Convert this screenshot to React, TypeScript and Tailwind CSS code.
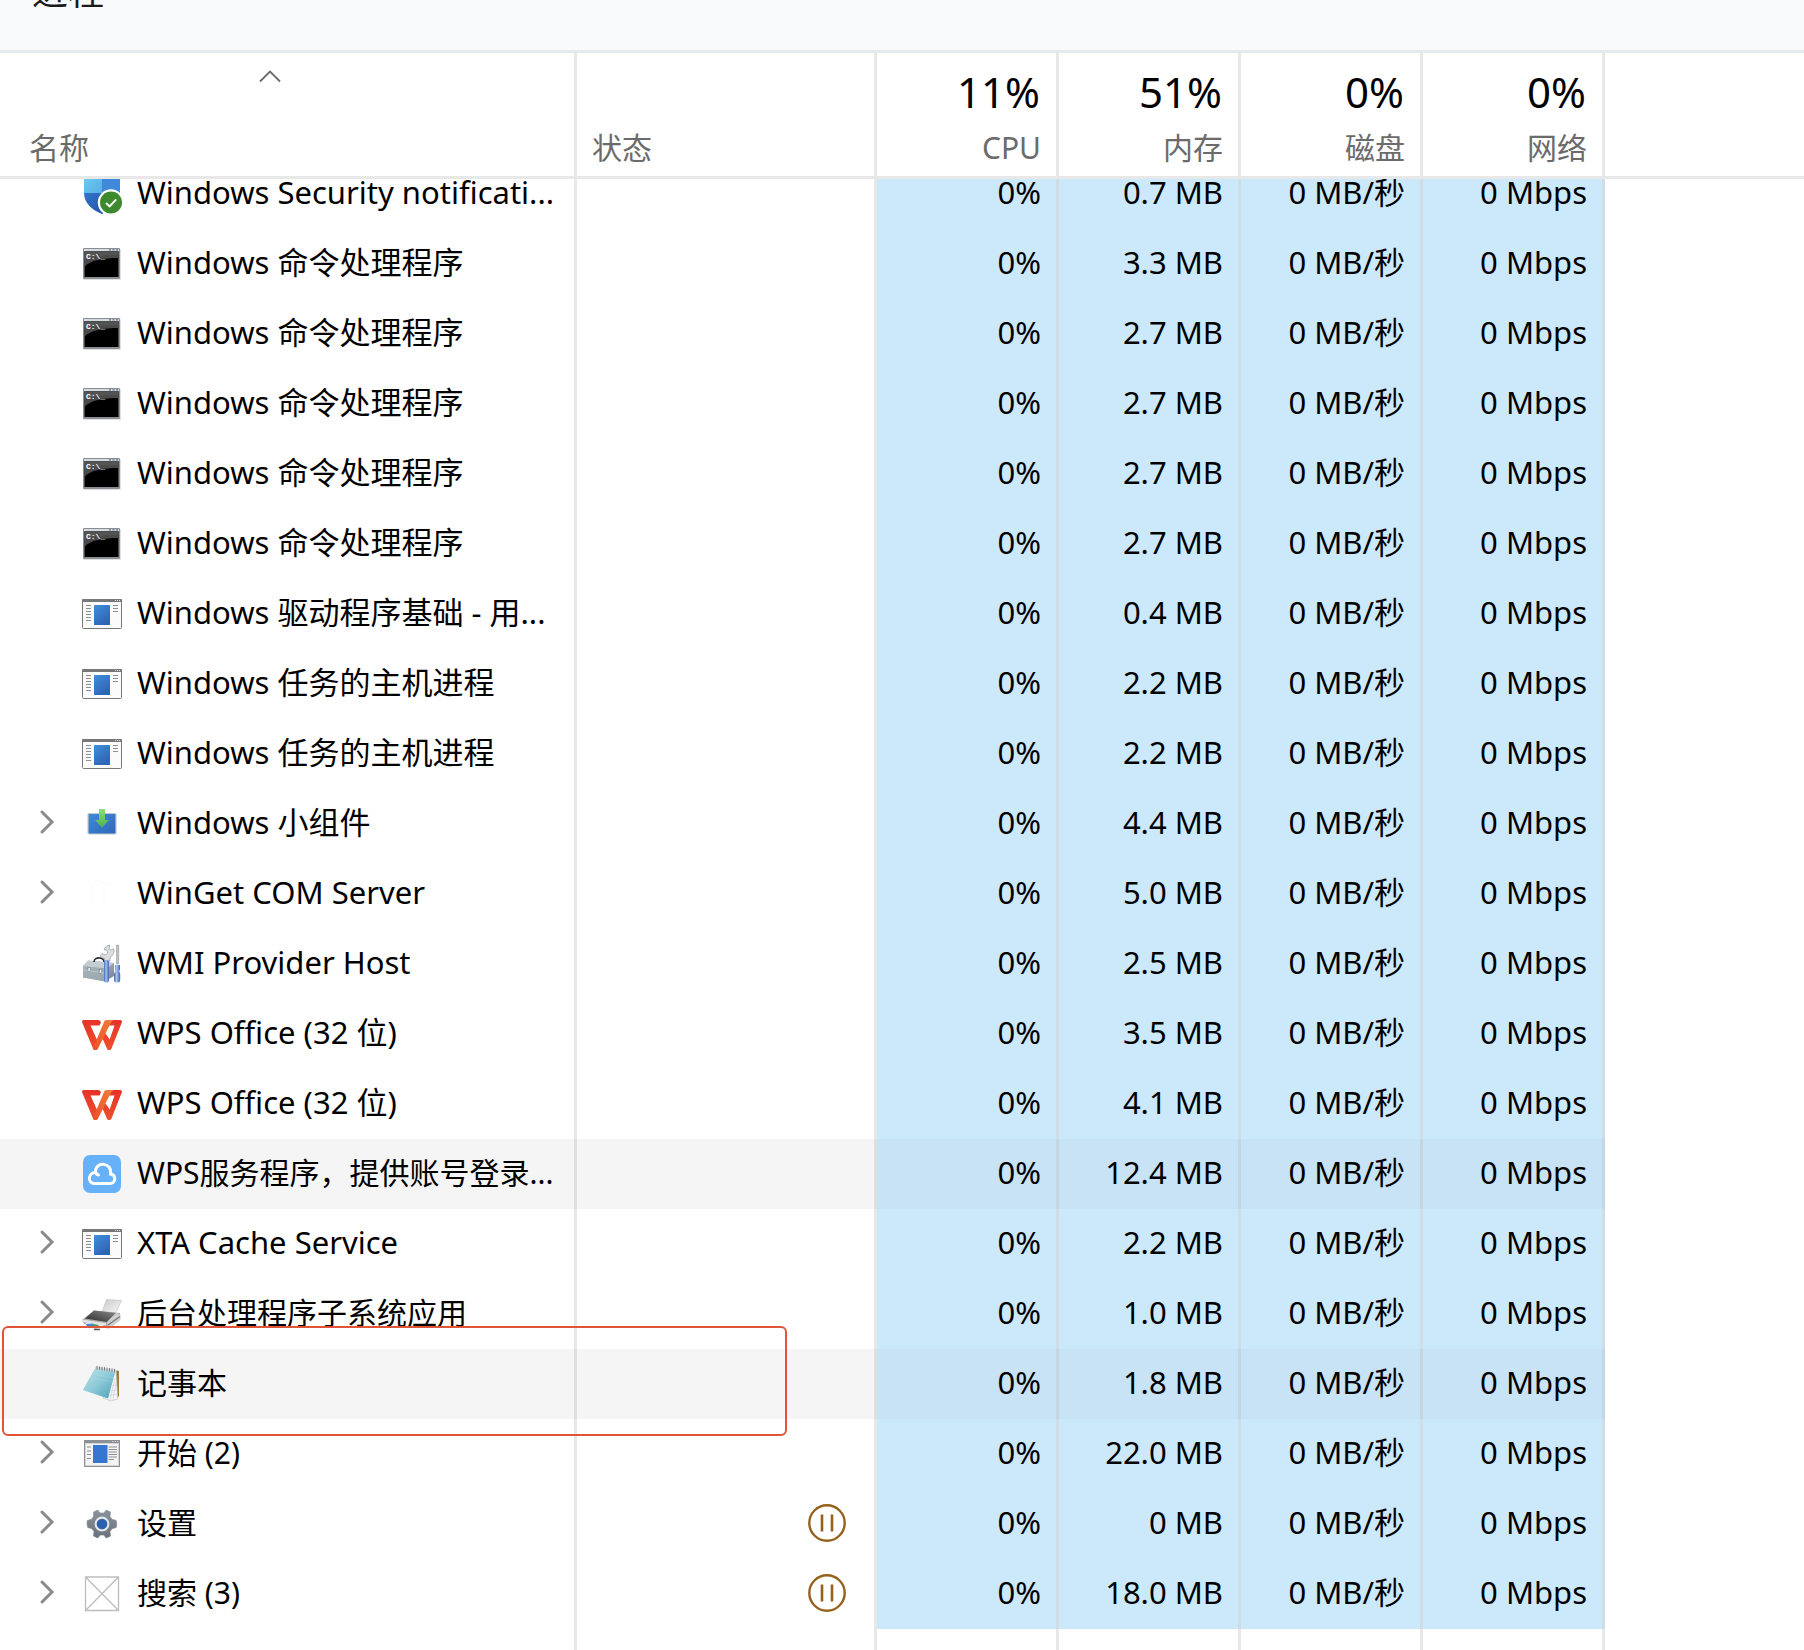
import type { ReactNode } from "react";

const COLS = "grid grid-cols-[577px_300px_repeat(4,182px)_minmax(0,1fr)]";
const LINE = "border-r-[3px] border-[#e8e8e8]";
const ICON = "size-10 shrink-0";

function ShieldIcon() {
  return (
    <svg viewBox="0 0 40 40" className={ICON} aria-hidden="true">
      <defs>
        <clipPath id="shield">
          <path d="M20 0c5 3 10 5 18 5v14c0 10-8 17-18 21C10 36 2 29 2 19V5c8 0 13-2 18-5z" />
        </clipPath>
        <linearGradient id="shTL" x1="0" y1="0" x2="1" y2="1">
          <stop offset="0" stopColor="#6fd0f4" />
          <stop offset="1" stopColor="#55aee2" />
        </linearGradient>
        <linearGradient id="shB" x1="0" y1="0" x2="1" y2="1">
          <stop offset="0" stopColor="#3575cf" />
          <stop offset="1" stopColor="#2558a8" />
        </linearGradient>
      </defs>
      <g clipPath="url(#shield)">
        <rect width="20" height="19" fill="url(#shTL)" />
        <rect x="20" width="20" height="19" fill="#4089da" />
        <rect y="19" width="20" height="21" fill="url(#shB)" />
        <rect x="20" y="19" width="20" height="21" fill="#2a5db0" />
      </g>
      <circle cx="29" cy="28.5" r="13.2" fill="#fff" />
      <circle cx="29" cy="28.5" r="11" fill="#3d8a2e" />
      <path d="M24 29l3.6 3.4 6.6-7" fill="none" stroke="#fff" strokeWidth="2" />
    </svg>
  );
}

function ConsoleIcon() {
  return (
    <svg viewBox="0 0 40 40" className={ICON} aria-hidden="true">
      <rect x="1" y="5" width="38" height="31" rx="1" fill="#000" opacity=".12" />
      <rect x="1" y="4" width="37" height="31" rx="1" fill="#8b8f94" />
      <rect x="2" y="5" width="35" height="2" fill="#d3d9df" />
      <path d="M27 5.800h2M30.500 5.800h2M34 5.800h2" stroke="#5f6b80" strokeWidth="1.200" />
      <rect x="2.500" y="7.500" width="34" height="25.500" fill="#000" />
      <path d="M2.500 7.500H36.500V14C22 14 8 16 2.500 23z" fill="#4a4a4a" />
      <path d="M2.500 7.500H36.500V11C22 11 8 12 2.500 16z" fill="#5e5e5e" opacity=".5" />
      <text x="4" y="15" fontSize="8" fontFamily="Liberation Mono, monospace" fontWeight="bold" fill="#fff">
        C:\_
      </text>
    </svg>
  );
}

function WindowIcon() {
  return (
    <svg viewBox="0 0 40 40" className={ICON} aria-hidden="true">
      <defs>
        <linearGradient id="winBlue" x1="0" y1="0" x2=".6" y2="1">
          <stop offset="0" stopColor="#3f8fdc" />
          <stop offset="1" stopColor="#2e64b4" />
        </linearGradient>
      </defs>
      <rect x=".5" y="5.500" width="39" height="29" rx="1" fill="#fbfbfb" stroke="#787878" />
      <rect x="0" y="5" width="40" height="3" rx="1" fill="#787878" />
      <path d="M33 6.500h1M35 6.500h1M37 6.500h1" stroke="#ddd" />
      <rect x="12" y="11" width="16" height="20" rx=".6" fill="url(#winBlue)" />
      <path
        d="M4 11.500h5M4 14.500h5M4 17.500h5M4 20.500h5M4 23.500h5M4 26.500h5M31 11.500h5M31 14.500h5M31 17.500h5"
        stroke="#8f8f8f"
      />
    </svg>
  );
}

function WidgetIcon() {
  return (
    <svg viewBox="0 0 40 40" className={ICON} aria-hidden="true">
      <defs>
        <linearGradient id="wBlue" x1="0" y1="0" x2="1" y2="1">
          <stop offset="0" stopColor="#3f8cd8" />
          <stop offset="1" stopColor="#2f66ba" />
        </linearGradient>
        <linearGradient id="wGreen" x1="0" y1="0" x2="0" y2="1">
          <stop offset="0" stopColor="#86e07c" />
          <stop offset="1" stopColor="#53b04c" />
        </linearGradient>
      </defs>
      <rect x="6" y="9.500" width="28" height="20.500" rx="1" fill="url(#wBlue)" stroke="#c3c8ce" strokeWidth="1.200" />
      <path d="M17 5h6v11h4l-7 7.500-7-7.500h4z" fill="url(#wGreen)" />
    </svg>
  );
}

function PackageIcon() {
  return (
    <svg viewBox="0 0 40 40" className={ICON} aria-hidden="true">
      <path d="M6 10l8-4 18 6M10 10v20M14 12l10-4M22 16v18" fill="none" stroke="#fcfcfc" strokeWidth="1.500" />
    </svg>
  );
}

function ToolboxIcon() {
  return (
    <svg viewBox="0 0 40 40" className={ICON} aria-hidden="true">
      <defs>
        <linearGradient id="tbBox" x1="0" y1="0" x2="1" y2="1">
          <stop offset="0" stopColor="#b9c4c9" />
          <stop offset="1" stopColor="#77858c" />
        </linearGradient>
        <linearGradient id="tbHandle" x1="0" y1="0" x2="1" y2="0">
          <stop offset="0" stopColor="#3d66ac" />
          <stop offset=".4" stopColor="#a9c4ee" />
          <stop offset="1" stopColor="#3c66b4" />
        </linearGradient>
      </defs>
      <path d="M1 22l5-5.500 26 2.500v13l-9 5.500-22-4z" fill="url(#tbBox)" />
      <path d="M1 22l5-5.500 26 2.500-7 5.500z" fill="#c3cdd2" />
      <path d="M1 22l22 3v12L1 33.500z" fill="#a2afb5" opacity=".7" />
      <path d="M1 26l22 3" stroke="#c6d0d4" strokeWidth=".7" />
      <path d="M12 18c0-3 3-4.500 6-4s4 1.500 4 4" fill="none" stroke="#26292c" strokeWidth="1.600" />
      <rect x="6" y="23.500" width="2.200" height="4" fill="#eef1f2" stroke="#6d777c" strokeWidth=".5" />
      <rect x="17.500" y="25.500" width="2.200" height="4" fill="#eef1f2" stroke="#6d777c" strokeWidth=".5" />
      <path
        d="M22.500 17v-2.500l-4-1.500c0-1.500.5-2.500 1.500-3.500l3 1.500 2.500-1.500-.5-3-3-1c1-2.500 3-4 6-4.300l-1 3 1.500 2 3.200-1.500c.8 3-.2 6.500-3.700 8.800V17z"
        fill="#dcdfe1"
        stroke="#92979b"
        strokeWidth=".7"
      />
      <rect x="22" y="16" width="5" height="22.500" rx="2" fill="url(#tbHandle)" />
      <path d="M34.500 1h2.200v19h-2.200z" fill="#bcc0c4" stroke="#8c9195" strokeWidth=".5" />
      <path d="M33 21h5v4.500l-.8 1.500 1 3v6a2.500 2.500 0 0 1-2.500 2.500h-1A2.500 2.500 0 0 1 32 36v-6l1.500-3-.5-1.500z" fill="url(#tbHandle)" />
    </svg>
  );
}

function WpsIcon() {
  return (
    <svg viewBox="0 0 40 40" className={ICON} aria-hidden="true">
      <defs>
        <linearGradient id="wpsRed" x1="0" y1="0" x2="0" y2="1">
          <stop offset="0" stopColor="#e63329" />
          <stop offset="1" stopColor="#ee4f2b" />
        </linearGradient>
        <linearGradient id="wpsOr" x1="1" y1="0" x2="0" y2="1">
          <stop offset="0" stopColor="#ef7f38" />
          <stop offset="1" stopColor="#ee4f2b" />
        </linearGradient>
      </defs>
      <path
        d="M1.800 6H16c1.500 0 2.500 1 3 2.500l-1.500 3H8.500L16 28l-.500 6.500c-1 2-3.500 2-4.500 0L.2 8.600C-.3 7.200.4 6 1.800 6z"
        fill="url(#wpsRed)"
      />
      <path
        d="M26 6h12.200c1.400 0 2.100 1.200 1.600 2.600L29.500 34.500c-1 2-3.800 2-4.600 0L20.500 24.500l3.500-8 3.500 9 5-14H26z"
        fill="url(#wpsRed)"
      />
      <path d="M24.500 6H32c-2.500 1-3.200 3-4.500 6L16 34.500c-1 2-4.200 2-5 0l.500-1.500L22 8c.5-1.300 1.200-2 2.500-2z" fill="url(#wpsOr)" />
      <path d="M23.500 19.500l4-7.500h4.500l-4.500 13z" fill="#fff" />
    </svg>
  );
}

function CloudIcon() {
  return (
    <svg viewBox="0 0 40 40" className={ICON} aria-hidden="true">
      <rect x="1" y="1" width="38" height="38" rx="7" fill="#66b1f7" />
      <path
        d="M12.500 29.500h15.500c6 0 6.500-8.500.500-9.500 2-11.500-14-13-15-3.500-.2 2.500 1 4 3 4.500M13.500 18.500c-7.500 0-8.500 11-1 11"
        fill="none"
        stroke="#fff"
        strokeWidth="3"
        strokeLinecap="round"
      />
    </svg>
  );
}

function PrinterIcon() {
  return (
    <svg viewBox="0 0 40 40" className={ICON} aria-hidden="true">
      <defs>
        <linearGradient id="prPaper" x1="0" y1="0" x2="1" y2="1">
          <stop offset="0" stopColor="#c9c9c9" />
          <stop offset="1" stopColor="#fafafa" />
        </linearGradient>
        <linearGradient id="prTop" x1="0" y1="1" x2="1" y2="0">
          <stop offset="0" stopColor="#2c2c2c" />
          <stop offset="1" stopColor="#8a8a8a" />
        </linearGradient>
      </defs>
      <path d="M24.500 5.500L39.500 6.500 33 20l-13-2z" fill="url(#prPaper)" stroke="#bdbdbd" strokeWidth=".6" />
      <path d="M0 26l12-9.500L38 19v7l-11 8.500L2 30z" fill="#a7a7a7" />
      <path d="M12 16.500l22 2.500-9 9L3 24.500z" fill="url(#prTop)" />
      <path d="M25 28l9.500-9.500 4 2.500v5L26 34.500z" fill="#cfcfcf" />
      <path d="M26 31l12-8.500" stroke="#777" strokeWidth="1.200" />
      <path d="M0 25.500l24 3.500v2.500L0 28z" fill="#e4e4e4" />
      <path d="M4 28.500l18 2.500-7 5-12-3z" fill="#f1f1f1" />
      <path d="M4 30l7-.5 1 3.500-7-.5z" fill="#3b8fd6" />
      <path d="M11 30l6 1-3 3.500-3-1z" fill="#3f9b5e" />
      <path d="M12 35.500h6" stroke="#555" strokeWidth="1.500" />
    </svg>
  );
}

function NotepadIcon() {
  return (
    <svg viewBox="0 0 40 40" className={ICON} aria-hidden="true">
      <defs>
        <linearGradient id="npCover" x1="0" y1="0" x2="1" y2="1">
          <stop offset="0" stopColor="#c0e5ec" />
          <stop offset=".5" stopColor="#8cc9d8" />
          <stop offset="1" stopColor="#4c9fb5" />
        </linearGradient>
      </defs>
      <path d="M33 6l4 1v25l-4 4z" fill="#a07c3c" />
      <path d="M34 6l1.800 29-7 2L21 34z" fill="#f4f6f7" stroke="#b4bcc0" strokeWidth=".6" />
      <path d="M33 14l-5 22M34 18l-3 18M26 32l9-2M28 27l7-1.500M30 22l5-1" stroke="#c5ccd0" strokeWidth=".6" />
      <path d="M13.500 3.500L33.500 7 26 34.500.8 26z" fill="url(#npCover)" />
      <path d="M12.500 6l20.500 3.500M11 10l21 4M9.500 14l21 4" stroke="#d7eff4" strokeWidth=".5" opacity=".4" />
      <path d="M14 2.500l20.500 3.500-.5 2.500-21-3.800z" fill="#d5dadb" />
      <path d="M15 2v3.500M17.500 2.400v3.500M20 2.800v3.500M22.500 3.200v3.500M25 3.600v3.500M27.500 4v3.500M30 4.400v3.500M32.500 4.800v3.500" stroke="#697275" strokeWidth=".9" />
    </svg>
  );
}

function StartIcon() {
  return (
    <svg viewBox="0 0 40 40" className={ICON} aria-hidden="true">
      <rect x="2.500" y="6.500" width="35" height="26" fill="#f4f4f4" stroke="#8d9094" />
      <rect x="2" y="6" width="36" height="3" fill="#8d9094" />
      <path d="M30 7.500h1.500M32.500 7.500h1.500M35 7.500h1.500" stroke="#c9cbce" />
      <rect x="3.500" y="9.500" width="33" height="22" fill="none" stroke="#d5d5d5" />
      <rect x="11" y="11" width="14.500" height="18" fill="#3576d0" />
      <path
        d="M5 13h4M5 17h4M5 20.500h4M5 24.500h4M26.500 13h8.500M26.500 15.500h8.500M26.500 18h8.500M26.500 20.500h8.500M26.500 23h8.500M26.500 25.500h5.500"
        stroke="#8e8e8e"
      />
    </svg>
  );
}

function GearIcon() {
  return (
    <svg viewBox="0 0 40 40" className={ICON} aria-hidden="true">
      <defs>
        <linearGradient id="gear" x1="0" y1="0" x2="0" y2="1">
          <stop offset="0" stopColor="#8b929b" />
          <stop offset="1" stopColor="#6a727c" />
        </linearGradient>
      </defs>
      <path
        d="M11.500 8l4.200-2 2.600 3h3.400l2.600-3 4.200 2-.5 4.500 2 2.700 4.200 1.300.5 3.500-.5 3.500-4.200 1.300-2 2.700.5 4.500-4.200 2-2.600-3h-3.400l-2.600 3-4.200-2 .5-4.500-2-2.700-4.200-1.300L5 20l.3-3.500 4.200-1.300 2-2.700z"
        fill="url(#gear)"
        stroke="url(#gear)"
        strokeWidth=".6"
        strokeLinejoin="round"
      />
      <circle cx="20" cy="20" r="7.400" fill="#e4e6e8" />
      <circle cx="20" cy="20" r="5.300" fill="#2a61b0" />
    </svg>
  );
}

function PlaceholderIcon() {
  return (
    <svg viewBox="0 0 40 40" className={ICON} aria-hidden="true">
      <path d="M3.500 3h33v33.500h-33zM3.500 3l33 33.500M36.500 3l-33 33.500" fill="none" stroke="#bdbdbd" strokeWidth="1.300" />
    </svg>
  );
}

function PauseIcon() {
  return (
    <svg viewBox="0 0 38 38" className="size-[38px]" role="img" aria-label="已暂停">
      <circle cx="19" cy="19" r="17.700" fill="none" stroke="#96611c" strokeWidth="2.400" />
      <path d="M14 10.500v17M24 10.500v17" stroke="#96611c" strokeWidth="2.600" />
    </svg>
  );
}

type Row = {
  icon: ReactNode;
  name: string;
  mem: string;
  compact?: boolean;
  expandable?: boolean;
  shaded?: boolean;
  paused?: boolean;
  marked?: boolean;
};

const cmd = (mem: string): Row => ({ icon: <ConsoleIcon />, name: "Windows 命令处理程序", mem });

const ROWS: Row[] = [
  { icon: <ShieldIcon />, name: "Windows Security notificati...", mem: "0.7 MB" },
  cmd("3.3 MB"),
  cmd("2.7 MB"),
  cmd("2.7 MB"),
  cmd("2.7 MB"),
  cmd("2.7 MB"),
  { icon: <WindowIcon />, name: "Windows 驱动程序基础 - 用...", mem: "0.4 MB" },
  { icon: <WindowIcon />, name: "Windows 任务的主机进程", mem: "2.2 MB" },
  { icon: <WindowIcon />, name: "Windows 任务的主机进程", mem: "2.2 MB" },
  { icon: <WidgetIcon />, name: "Windows 小组件", mem: "4.4 MB", expandable: true },
  { icon: <PackageIcon />, name: "WinGet COM Server", mem: "5.0 MB", expandable: true },
  { icon: <ToolboxIcon />, name: "WMI Provider Host", mem: "2.5 MB" },
  { icon: <WpsIcon />, name: "WPS Office (32 位)", mem: "3.5 MB" },
  { icon: <WpsIcon />, name: "WPS Office (32 位)", mem: "4.1 MB" },
  { icon: <CloudIcon />, name: "WPS服务程序，提供账号登录...", mem: "12.4 MB", compact: true, shaded: true },
  { icon: <WindowIcon />, name: "XTA Cache Service", mem: "2.2 MB", expandable: true },
  { icon: <PrinterIcon />, name: "后台处理程序子系统应用", mem: "1.0 MB", compact: true, expandable: true },
  { icon: <NotepadIcon />, name: "记事本", mem: "1.8 MB", compact: true, shaded: true, marked: true },
  { icon: <StartIcon />, name: "开始 (2)", mem: "22.0 MB", compact: true, expandable: true },
  { icon: <GearIcon />, name: "设置", mem: "0 MB", compact: true, expandable: true, paused: true },
  { icon: <PlaceholderIcon />, name: "搜索 (3)", mem: "18.0 MB", compact: true, expandable: true, paused: true },
];

const METRICS = [
  { value: "11%", label: "CPU" },
  { value: "51%", label: "内存" },
  { value: "0%", label: "磁盘" },
  { value: "0%", label: "网络" },
];

function ProcessRow({ row }: { row: Row }) {
  const plain = row.shaded ? "border-r-[3px] border-[#dfdfdf] bg-[#f5f5f5]" : LINE;
  const heat = row.shaded
    ? "border-r-[3px] border-[#c3d7e3] bg-[#c7e3f5]"
    : "border-r-[3px] border-[#cfdde6] bg-[#cce9fc]";
  return (
    <tr className={`relative h-[70px] ${COLS}`}>
      <td className={`flex items-center ${plain}`}>
        <div className="flex w-[82px] shrink-0 pb-1 pl-[38px]">
          {row.expandable && (
            <button type="button" aria-label={`展开 ${row.name}`}>
              <svg viewBox="0 0 18 26" className="h-[26px] w-[18px]" aria-hidden="true">
                <path d="M4 3l10 10L4 23" fill="none" stroke="#8a8a8a" strokeWidth="3" strokeLinecap="round" />
              </svg>
            </button>
          )}
        </div>
        {row.icon}
        <span className={`pl-[15px] ${row.compact ? "pb-0.5 text-[30px]" : "pb-1 text-[31px]"}`}>{row.name}</span>
      </td>
      <td className={`flex items-center justify-end pr-7 pb-0.5 ${plain}`}>{row.paused && <PauseIcon />}</td>
      {["0%", row.mem, "0 MB/秒", "0 Mbps"].map((value, i) => (
        <td key={i} className={`flex items-center justify-end pr-[15px] pb-1 text-[31px] ${heat}`}>
          {value}
        </td>
      ))}
      {row.marked && (
        <td
          aria-hidden="true"
          className="pointer-events-none absolute -top-[23px] -bottom-[17px] left-[2px] z-10 w-[785px] rounded-md border-2 border-[#e05537]"
        />
      )}
    </tr>
  );
}

export default function App() {
  return (
    <main className="flex h-screen flex-col overflow-hidden bg-white font-['Noto_Sans','Noto_Sans_CJK_SC',sans-serif] text-[30px] leading-[40px] whitespace-nowrap text-black">
      <header className="h-[53px] shrink-0 overflow-hidden border-b-[3px] border-[#e6eaed] bg-[#f8fafc] pl-8">
        <h1 className="-mt-[30px] text-4xl leading-[44px] font-normal text-[#1b1b1b]">进程</h1>
      </header>
      <table className="flex min-h-0 flex-1 flex-col">
        <thead className="relative z-10 block shrink-0 bg-white">
          <tr className={`h-[126px] border-b-[3px] border-[#e8e8e8] ${COLS}`}>
            <th className={`font-normal ${LINE}`}>
              <button
                type="button"
                className="flex h-full w-full flex-col items-start justify-between pt-4 pr-16 pb-2 pl-[29px] text-[#6b6b6b]"
              >
                <svg viewBox="0 0 24 14" className="h-[14px] w-6 self-center" aria-hidden="true">
                  <path d="M2 12.500l10-10 10 10" fill="none" stroke="#6b6b6b" strokeWidth="1.800" />
                </svg>
                <span>名称</span>
              </button>
            </th>
            <th className={`flex items-end pb-2 pl-[15px] font-normal text-[#6b6b6b] ${LINE}`}>状态</th>
            {METRICS.map((m) => (
              <th key={m.label} className={`font-normal ${LINE}`}>
                <button type="button" className="flex h-full w-full flex-col items-end justify-end pr-[15px] pb-2">
                  <span className="pr-px pb-3 text-[42px] leading-[48px]">{m.value}</span>
                  <span className="text-[#6b6b6b]">{m.label}</span>
                </button>
              </th>
            ))}
            <th />
          </tr>
        </thead>
        <tbody className="-mt-5 flex min-h-0 flex-1 flex-col">
          {ROWS.map((row, i) => (
            <ProcessRow key={i} row={row} />
          ))}
          <tr className={`flex-1 ${COLS}`}>
            {Array.from({ length: 6 }, (_, i) => (
              <td key={i} className={LINE} />
            ))}
          </tr>
        </tbody>
      </table>
    </main>
  );
}
